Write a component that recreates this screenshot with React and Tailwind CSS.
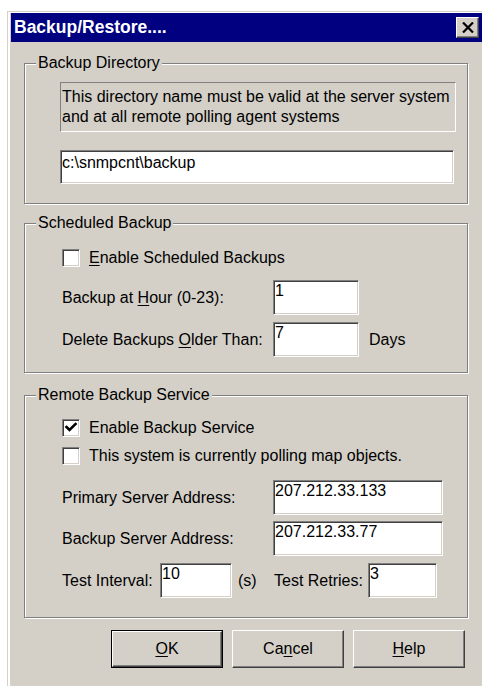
import React from "react";

const sunken =
  "bg-white border border-t-[#808080] border-l-[#808080] border-b-white border-r-white shadow-[inset_1px_1px_0_#404040,inset_-1px_-1px_0_#d4d0c8]";
const raised =
  "bg-[#d4d0c8] border border-t-white border-l-white border-b-[#404040] border-r-[#404040] shadow-[inset_-1px_-1px_0_#808080,inset_1px_1px_0_#d4d0c8]";

function GroupBox({ title, className, children }) {
  return (
    <div
      className={
        "relative w-[444px] border border-[#808080] shadow-[inset_1px_1px_0_#fff,1px_1px_0_#fff] " +
        className
      }
    >
      <div className="absolute -top-[11px] left-[11px] px-[2px] bg-[#d4d0c8] leading-[20px]">
        {title}
      </div>
      {children}
    </div>
  );
}

function CheckBox({ checked }) {
  return (
    <div className={"w-[18px] h-[18px] shrink-0 flex items-center justify-center " + sunken}>
      {checked && (
        <svg width="14" height="14" viewBox="0 0 14 14">
          <polyline
            points="2.5,6 5.5,9 11.5,3"
            fill="none"
            stroke="#000"
            strokeWidth="2.6"
            strokeLinecap="square"
          />
        </svg>
      )}
    </div>
  );
}

function Field({ value, className }) {
  return (
    <div className={"pl-[1px] pt-[1px] leading-[18px] " + sunken + " " + className}>
      {value}
    </div>
  );
}

function Key({ children }) {
  return <span className="underline decoration-1 underline-offset-2">{children}</span>;
}

function Button({ children, isDefault }) {
  const face = (
    <div className={"h-full w-full flex items-center justify-center " + raised}>{children}</div>
  );
  return isDefault ? (
    <div className="w-[112px] h-[38px] border border-black">{face}</div>
  ) : (
    <div className="w-[112px] h-[38px]">{face}</div>
  );
}

export default function App() {
  return (
    <div className="w-[482px] h-[686px] overflow-hidden bg-white pl-[7px] pt-[11px] font-['Liberation_Sans',Arial,sans-serif] text-[16px] text-black">
      <div className="h-full border-l border-t border-[#d4d0c8]">
        <div className="h-full border-l-2 border-t border-white">
          <div className="h-full pl-[1px] bg-[#d4d0c8]">
            {/* title bar */}
            <div className="h-[29px] bg-[#000080] flex items-center justify-between pl-[3px] pr-[3px]">
              <span className="text-white font-bold text-[17.5px] leading-none">
                Backup/Restore....
              </span>
              <div className={"w-[23px] h-[21px] flex items-center justify-center " + raised}>
                <svg width="12" height="11" viewBox="0 0 12 11">
                  <path d="M1 0.5 L11 10.5 M11 0.5 L1 10.5" stroke="#000" strokeWidth="2.2" />
                </svg>
              </div>
            </div>

            {/* dialog body */}
            <div className="pl-[13px] pt-[21px] flex flex-col">
              <GroupBox title="Backup Directory" className="pl-[35px] pt-[18px] pb-[19px]">
                <div className="w-[396px] h-[50px] border border-t-[#808080] border-l-[#808080] border-b-white border-r-white pl-[1px] pt-[4px] leading-[20px]">
                  This directory name must be valid at the server system
                  <br />
                  and at all remote polling agent systems
                </div>
                <div className={"mt-[18px] w-[394px] h-[34px] pl-[1px] pt-[3px] leading-[18px] " + sunken}>
                  c:\snmpcnt\backup
                </div>
              </GroupBox>

              <GroupBox title="Scheduled Backup" className="mt-[19px] pl-[37px] pt-[23px] pb-[15px]">
                <div className="h-[22px] flex items-center">
                  <CheckBox />
                  <span className="ml-[9px]">
                    <Key>E</Key>nable Scheduled Backups
                  </span>
                </div>
                <div className="mt-[11px] flex items-center">
                  <span className="w-[211px]">
                    Backup at <Key>H</Key>our (0-23):
                  </span>
                  <Field value="1" className="w-[86px] h-[35px]" />
                </div>
                <div className="mt-[7px] flex items-center">
                  <span className="w-[211px]">
                    Delete Backups <Key>O</Key>lder Than:
                  </span>
                  <Field value="7" className="w-[86px] h-[35px]" />
                  <span className="ml-[10px]">Days</span>
                </div>
              </GroupBox>

              <GroupBox title="Remote Backup Service" className="mt-[22px] pl-[37px] pt-[21px] pb-[19px]">
                <div className="h-[22px] flex items-center">
                  <CheckBox checked />
                  <span className="ml-[9px]">Enable Backup Service</span>
                </div>
                <div className="mt-[6px] h-[22px] flex items-center">
                  <CheckBox />
                  <span className="ml-[9px]">This system is currently polling map objects.</span>
                </div>
                <div className="mt-[13px] flex items-center">
                  <span className="w-[211px]">Primary Server Address:</span>
                  <Field value="207.212.33.133" className="w-[170px] h-[35px]" />
                </div>
                <div className="mt-[6px] flex items-center">
                  <span className="w-[211px]">Backup Server Address:</span>
                  <Field value="207.212.33.77" className="w-[170px] h-[35px]" />
                </div>
                <div className="mt-[7px] flex items-center">
                  <span className="w-[98px]">Test Interval:</span>
                  <Field value="10" className="w-[72px] h-[35px]" />
                  <span className="ml-[6px] w-[30px]">(s)</span>
                  <span className="ml-[6px] w-[94px]">Test Retries:</span>
                  <Field value="3" className="w-[69px] h-[35px]" />
                </div>
              </GroupBox>

              <div className="mt-[12px] pl-[87px] flex gap-[9px]">
                <Button isDefault>
                  <Key>O</Key>K
                </Button>
                <Button>
                  Ca<Key>n</Key>cel
                </Button>
                <Button>
                  <Key>H</Key>elp
                </Button>
              </div>
            </div>
          </div>
        </div>
      </div>
    </div>
  );
}
